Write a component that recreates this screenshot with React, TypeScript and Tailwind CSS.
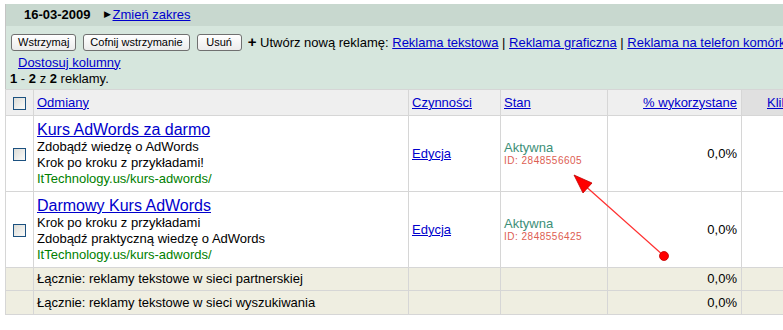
import React from "react"

const ads = [
    {
        title: "Kurs AdWords za darmo",
        line1: "Zdobądź wiedzę o AdWords",
        line2: "Krok po kroku z przykładami!",
        url: "ItTechnology.us/kurs-adwords/",
        id: "2848556605",
    },
    {
        title: "Darmowy Kurs AdWords",
        line1: "Krok po kroku z przykładami",
        line2: "Zdobądź praktyczną wiedzę o AdWords",
        url: "ItTechnology.us/kurs-adwords/",
        id: "2848556425",
    },
]

const totals = [
    "Łącznie: reklamy tekstowe w sieci partnerskiej",
    "Łącznie: reklamy tekstowe w sieci wyszukiwania",
]

function Checkbox() {
    return (
        <span className="inline-block w-[13px] h-[13px] border border-[#1c5180] bg-gradient-to-br from-[#dcdcd7] to-[#fbfbf9] align-middle" />
    )
}

function Btn({ children, className = "" }: { children: React.ReactNode; className?: string }) {
    return (
        <button
            className={`h-[17px] px-[6px] rounded-[3px] border border-[#707070] bg-gradient-to-b from-white to-[#ececec] text-[11px] leading-[15px] text-black ${className}`}
        >
            {children}
        </button>
    )
}

const link = "text-[#0000cc] underline"
const cell = "border border-[#d6d6d6]"

export default function App() {
    return (
        <div className="relative w-[783px] h-[330px] overflow-hidden bg-white pt-[4px] pl-[5px] font-['Liberation_Sans',Arial,sans-serif] text-[13px] text-black">
            <div className="w-[900px] border-l border-[#c4c4c4]">
                {/* Pasek daty */}
                <div className="h-[22px] bg-[#c8d8cf] flex items-center pl-[18px]">
                    <span className="font-bold">16-03-2009</span>
                    <span className="ml-[13px] text-[9px] mr-[2px]">▶</span>
                    <a className={link}>Zmień zakres</a>
                </div>

                {/* Akcje */}
                <div className="bg-[#d6e6dd] h-[63px] pt-[7px] pl-[5px]">
                    <div className="flex items-center whitespace-nowrap">
                        <Btn>Wstrzymaj</Btn>
                        <Btn className="ml-[7px]">Cofnij wstrzymanie</Btn>
                        <Btn className="ml-[7px] min-w-[45px]">Usuń</Btn>
                        <span className="ml-[6px]">
                            <span className="font-bold text-[15px] leading-[13px]">+</span> Utwórz nową reklamę:{" "}
                            <a className={link}>Reklama tekstowa</a> | <a className={link}>Reklama graficzna</a> |{" "}
                            <a className={link}>Reklama na telefon komórkowy</a>
                        </span>
                    </div>
                    <div className="pl-[7px] mt-[2px] leading-[16px]">
                        <a className={link}>Dostosuj kolumny</a>
                    </div>
                    <div className="-ml-px leading-[16px]">
                        <b>1</b> - <b>2</b> z <b>2</b> reklamy.
                    </div>
                </div>

                {/* Tabela */}
                <table className="border-collapse -ml-px">
                    <thead>
                        <tr className="h-[26px] bg-[#efefef]">
                            <th className={`${cell} w-[28px] text-center font-normal`}>
                                <Checkbox />
                            </th>
                            <th className={`${cell} w-[375px] text-left font-normal pl-[3px]`}>
                                <a className={link}>Odmiany</a>
                            </th>
                            <th className={`${cell} w-[92px] text-left font-normal pl-[3px]`}>
                                <a className={link}>Czynności</a>
                            </th>
                            <th className={`${cell} w-[107px] text-left font-normal pl-[3px]`}>
                                <a className={link}>Stan</a>
                            </th>
                            <th className={`${cell} w-[134px] text-right font-normal pr-[4px]`}>
                                <a className={link}>% wykorzystane</a>
                            </th>
                            <th className={`${cell} w-[120px] text-left font-normal pl-[25px] bg-[#e0e0e0]`}>
                                <a className={link}>Kliknięcia</a>
                            </th>
                        </tr>
                    </thead>
                    <tbody>
                        {ads.map((ad) => (
                            <tr key={ad.id} className="h-[75px]">
                                <td className={`${cell} text-center align-middle`}>
                                    <Checkbox />
                                </td>
                                <td className={`${cell} pl-[3px] py-[4px] align-top`}>
                                    <div className="text-[16px] leading-[19px]">
                                        <a className={link}>{ad.title}</a>
                                    </div>
                                    <div className="leading-[16px]">{ad.line1}</div>
                                    <div className="leading-[16px]">{ad.line2}</div>
                                    <div className="leading-[16px] text-[#008000]">{ad.url}</div>
                                </td>
                                <td className={`${cell} pl-[3px] align-middle`}>
                                    <a className={link}>Edycja</a>
                                </td>
                                <td className={`${cell} pl-[3px] align-middle`}>
                                    <div className="text-[#3d8f78] leading-[15px]">Aktywna</div>
                                    <div className="text-[10px] leading-[12px] tracking-[0.5px] text-[#dd5d52]">
                                        ID: {ad.id}
                                    </div>
                                </td>
                                <td className={`${cell} text-right pr-[4px] align-middle`}>0,0%</td>
                                <td className={cell}></td>
                            </tr>
                        ))}
                        {totals.map((t, i) => (
                            <tr key={t} className={`${i === 0 ? "h-[23px]" : "h-[24px]"} bg-[#efeee1]`}>
                                <td className={cell}></td>
                                <td className={`${cell} pl-[3px]`}>{t}</td>
                                <td className={cell}></td>
                                <td className={cell}></td>
                                <td className={`${cell} text-right pr-[4px]`}>0,0%</td>
                                <td className={cell}></td>
                            </tr>
                        ))}
                    </tbody>
                </table>
            </div>

            {/* Strzałka */}
            <svg className="absolute left-0 top-0 pointer-events-none" width="783" height="330">
                <line x1="664" y1="256" x2="582" y2="183" stroke="#ff3030" strokeWidth="1.2" />
                <polygon points="574,175 583,193 592,183" fill="#ff0000" stroke="#c00000" strokeWidth="0.8" />
                <circle cx="664" cy="256" r="4.5" fill="#ff0000" stroke="#c00000" strokeWidth="0.8" />
            </svg>
        </div>
    )
}
